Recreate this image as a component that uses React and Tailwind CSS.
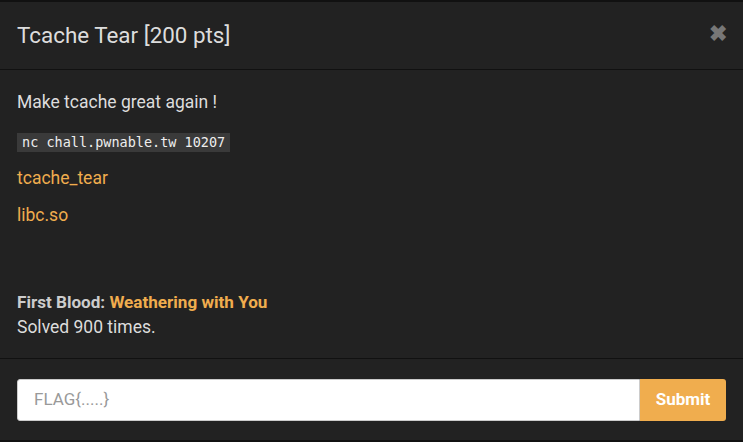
export default function App() {
  return (
    <div className="w-[743px] h-[442px] bg-[#111] overflow-hidden" style={{ fontFamily: "Roboto, 'Liberation Sans', sans-serif" }}>
      <div className="mt-[2px] h-[438px] bg-[#222] flex flex-col text-[#ddd]">
        <div className="h-[68px] flex items-center justify-between pl-[17px] pr-[16px] border-b border-[#111]">
          <h4 className="text-[22.4px] text-[#ddd] leading-none">Tcache Tear [200 pts]</h4>
          <span className="text-[#777] text-[22px] font-bold leading-none mb-[4px]">✖</span>
        </div>
        <div className="flex-1 px-[17px] pt-[20px] text-[17.5px] border-b border-[#111]">
          <p className="leading-[24px]">Make tcache great again !</p>
          <div className="mt-[19px] h-[19px] flex">
            <code className="bg-[#3a3a3a] px-[5px] h-[19px] leading-[19px] text-[13.5px] text-[#eee]" style={{ fontFamily: "'DejaVu Sans Mono', monospace" }}>nc chall.pwnable.tw 10207</code>
          </div>
          <p className="mt-[14px] leading-[24px] text-[#f0ad4e]">tcache_tear</p>
          <p className="mt-[13px] leading-[24px] text-[#f0ad4e]">libc.so</p>
          <p className="mt-[63px] leading-[24px] font-bold text-[17.1px] text-[#ccc]">First Blood: <span className="text-[#f0ad4e]">Weathering with You</span></p>
          <p className="mt-[1px] leading-[24px] text-[#ddd]">Solved 900 times.</p>
        </div>
        <div className="h-[81px] flex items-start pt-[20px] px-[17px]">
          <div className="flex w-[709px] h-[42px]">
            <input className="flex-1 bg-white rounded-l-[3px] px-[16px] text-[17px] text-[#333] placeholder:text-[#999] outline-none border border-[#ccc]" placeholder="FLAG{.....}" />
            <button className="w-[86px] bg-[#f0ad4e] text-white font-bold text-[17px] rounded-r-[3px]">Submit</button>
          </div>
        </div>
      </div>
    </div>
  );
}
